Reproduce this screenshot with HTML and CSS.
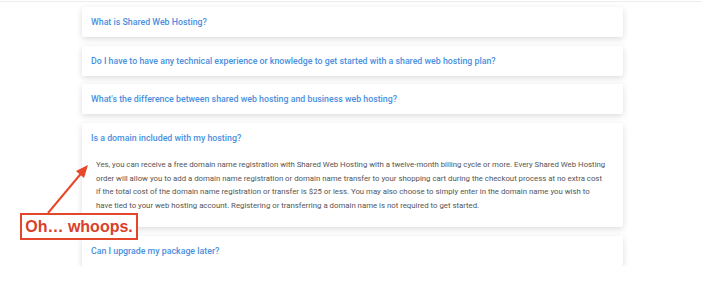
FILE: index.html
```html
<!DOCTYPE html>
<html lang="en">
<head>
    <meta charset="UTF-8">
    <meta name="viewport" content="width=device-width, initial-scale=1.0">
    <title>Shared Web Hosting FAQ</title>
    <link rel="stylesheet" href="styles.css">
</head>
<body>

    <!-- Thin rule at the very top of the page -->
    <div class="top-rule"></div>

    <!-- FAQ accordion -->
    <div class="faq">

        <div class="faq-item">
            <div class="faq-question">What is Shared Web Hosting?</div>
        </div>

        <div class="faq-item">
            <div class="faq-question">Do I have to have any technical experience or knowledge to get started with a shared web hosting plan?</div>
        </div>

        <div class="faq-item">
            <div class="faq-question">What's the difference between shared web hosting and business web hosting?</div>
        </div>

        <div class="faq-item open">
            <div class="faq-question">Is a domain included with my hosting?</div>
            <p class="faq-answer">Yes, you can receive a free domain name registration with Shared Web Hosting with a twelve-month billing cycle or more. Every Shared Web Hosting order will allow you to add a domain name registration or domain name transfer to your shopping cart during the checkout process at no extra cost if the total cost of the domain name registration or transfer is $25 or less. You may also choose to simply enter in the domain name you wish to have tied to your web hosting account. Registering or transferring a domain name is not required to get started.</p>
        </div>

        <div class="faq-item">
            <div class="faq-question">Can I upgrade my package later?</div>
        </div>

    </div>

    <!-- Annotation drawn over the page -->
    <svg class="callout-arrow" width="110" height="70" viewBox="0 0 110 70">
        <line x1="8" y1="62" x2="44" y2="19" stroke="#e8472b" stroke-width="2" />
        <polygon points="48,14 36,20 44,27" fill="#e8472b" />
    </svg>
    <div class="callout">Oh… whoops.</div>

</body>
</html>
```

FILE: styles.css
```css
/* General page style */

body {
    font-family: Roboto, "Noto Sans", Arial, sans-serif;
    background-color: #fff;
    margin: 0;
    padding: 0;
    position: relative;
}

.top-rule {
    height: 1px;
    border-bottom: 1px solid #ececec;
}

/* FAQ cards */

.faq {
    width: 541px;
    margin-left: 82px;
    padding-top: 5px;
    display: flex;
    flex-direction: column;
    gap: 8.6px;
}

.faq-item {
    background-color: #fff;
    border-radius: 2px;
    box-shadow: 0 2px 6px rgba(0, 0, 0, 0.14);
}

.faq-question {
    color: #4a8fe0;
    font-size: 8.8px;
    font-weight: 500;
    line-height: 30px;
    padding: 0 9px;
}

.faq-answer {
    color: #555;
    font-size: 7.8px;
    line-height: 13.4px;
    margin: 5.5px 0 0 0;
    padding: 0 16.5px 15px 14px;
}

/* Red annotation */

.callout-arrow {
    position: absolute;
    left: 40px;
    top: 151px;
}

.callout {
    position: absolute;
    left: 20px;
    top: 213px;
    width: 114px;
    height: 23px;
    border: 2px solid #e3462a;
    background-color: #fff;
    color: #d9412a;
    font-family: Arial, "Liberation Sans", sans-serif;
    font-weight: bold;
    font-size: 16px;
    line-height: 23px;
    text-align: center;
    white-space: nowrap;
}
```
